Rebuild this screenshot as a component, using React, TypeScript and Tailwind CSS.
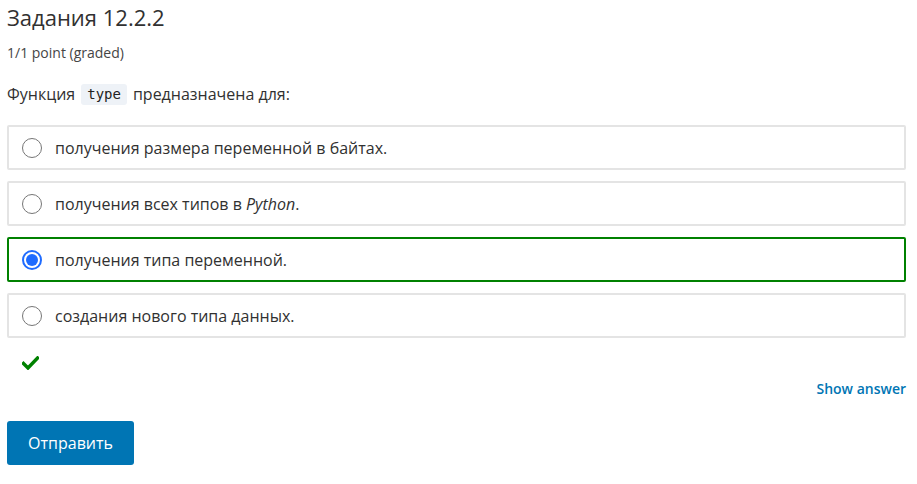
const options = [
    { text: <>получения размера переменной в байтах.</>, checked: false },
    { text: <>получения всех типов в <em>Python</em>.</>, checked: false },
    { text: <>получения типа переменной.</>, checked: true },
    { text: <>создания нового типа данных.</>, checked: false },
];

const Radio = ({ checked }: { checked: boolean }) =>
    checked ? (
        <span className="flex h-[20px] w-[20px] shrink-0 items-center justify-center rounded-full border-2 border-[#1e6bff]">
            <span className="h-[12px] w-[12px] rounded-full bg-[#1e6bff]" />
        </span>
    ) : (
        <span className="h-[20px] w-[20px] shrink-0 rounded-full border border-[#767676] bg-white" />
    );

const App = () => {
    return (
        <div className="w-[917px] h-[484px] bg-white px-[7px] pt-[2px] text-[#313131] font-['Open_Sans',sans-serif] overflow-hidden">
            <h2 className="text-[22px] leading-[30px] text-[#313131]">Задания 12.2.2</h2>
            <div className="mt-[11px] text-[14px] leading-[20px] text-[#454545]">1/1 point (graded)</div>
            <p className="mt-[19px] flex h-[24px] items-center text-[16px]">
                Функция
                <code className="mx-[6px] rounded-[3px] bg-[#eef2f7] px-[6px] py-[2px] text-[14px] leading-[17px] font-['DejaVu_Sans_Mono',monospace] text-[#222]">
                    type
                </code>
                предназначена для:
            </p>
            <div className="mt-[19px] flex w-[899px] flex-col gap-[11px]">
                {options.map((o, i) => (
                    <label
                        key={i}
                        className={`flex h-[45px] items-center gap-[13px] rounded-[2px] border-2 pl-[13px] text-[16px] ${
                            o.checked ? "border-[#008100]" : "border-[#e4e4e4]"
                        }`}
                    >
                        <Radio checked={o.checked} />
                        <span>{o.text}</span>
                    </label>
                ))}
            </div>
            <div className="mt-[18px] flex pl-[15px]">
                <svg width="17" height="14" viewBox="0 0 17 14">
                    <path d="M1.5 7.5 L6 12 L15.5 2" fill="none" stroke="#008100" strokeWidth="3.4" strokeLinecap="square" />
                </svg>
            </div>
            <div className="mt-[9px] flex w-[899px] justify-end">
                <button className="text-[14px] font-semibold leading-[20px] text-[#0075b4]">Show answer</button>
            </div>
            <button className="mt-[22px] h-[44px] w-[127px] rounded-[3px] bg-[#0075b4] text-[16px] text-white">
                Отправить
            </button>
        </div>
    );
};

export default App;
